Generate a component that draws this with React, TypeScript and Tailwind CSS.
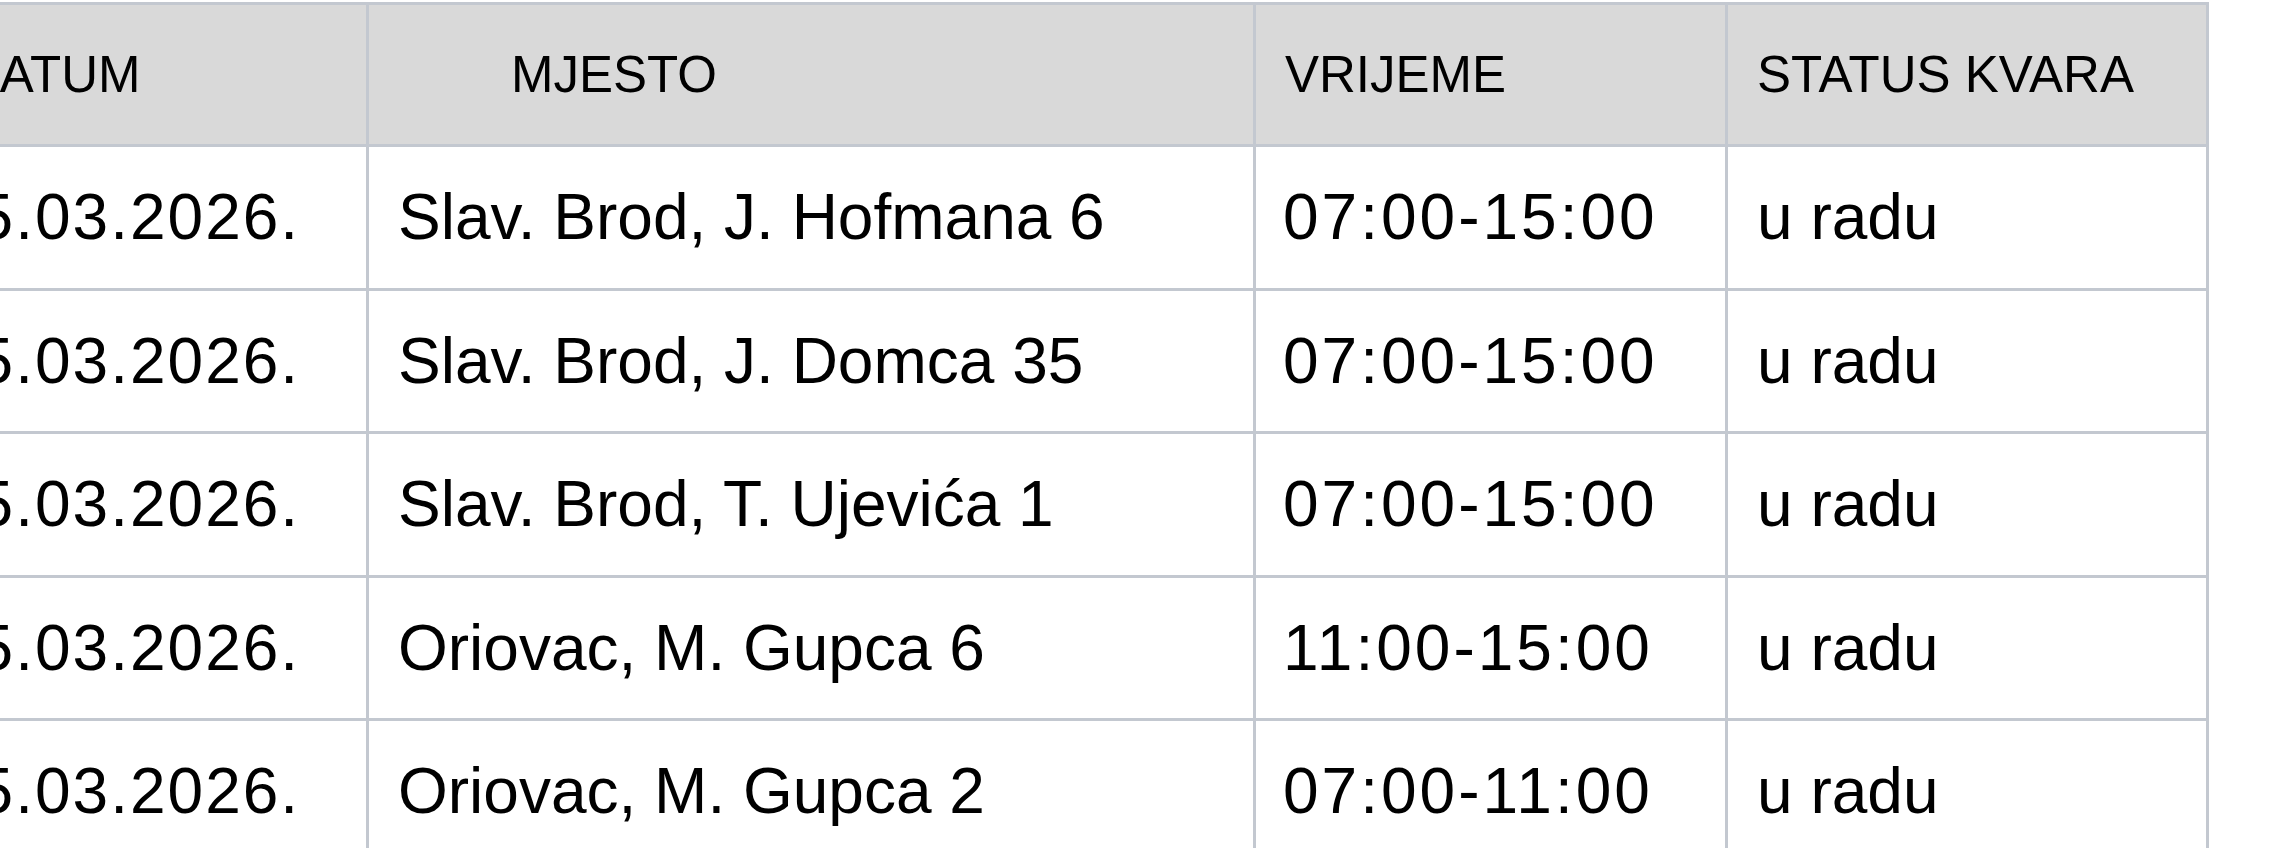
import React from "react";

const rows = [
  { datum: "05.03.2026.", mjesto: "Slav. Brod, J. Hofmana 6", vrijeme: "07:00-15:00", status: "u radu" },
  { datum: "05.03.2026.", mjesto: "Slav. Brod, J. Domca 35", vrijeme: "07:00-15:00", status: "u radu" },
  { datum: "05.03.2026.", mjesto: "Slav. Brod, T. Ujevića 1", vrijeme: "07:00-15:00", status: "u radu" },
  { datum: "05.03.2026.", mjesto: "Oriovac, M. Gupca 6", vrijeme: "11:00-15:00", status: "u radu" },
  { datum: "05.03.2026.", mjesto: "Oriovac, M. Gupca 2", vrijeme: "07:00-11:00", status: "u radu" },
];

export default function App() {
  return (
    <div
      className="w-[2275px] h-[848px] overflow-hidden bg-white text-black"
      style={{ fontFamily: '"Liberation Sans", Arial, sans-serif' }}
    >
      <table className="ml-[-87px] mt-[2px] table-fixed border-separate border-spacing-0 border-t-[3px] border-l-[3px] border-[#c3c8d0]">
        <colgroup>
          <col className="w-[453px]" />
          <col className="w-[887px]" />
          <col className="w-[472px]" />
          <col className="w-[481px]" />
        </colgroup>
        <thead>
          <tr className="bg-[#d9d9d9] h-[142px]">
            <th className="border-r-[3px] border-b-[3px] border-[#c3c8d0] pl-[47px] text-left align-middle text-[51px] font-normal leading-none">
              DATUM
            </th>
            <th className="border-r-[3px] border-b-[3px] border-[#c3c8d0] pl-[142px] text-left align-middle text-[51px] font-normal leading-none">
              MJESTO
            </th>
            <th className="border-r-[3px] border-b-[3px] border-[#c3c8d0] pl-[29px] text-left align-middle text-[51px] font-normal leading-none">
              VRIJEME
            </th>
            <th className="border-r-[3px] border-b-[3px] border-[#c3c8d0] pl-[29px] text-left align-middle text-[51px] font-normal leading-none whitespace-nowrap">
              STATUS KVARA
            </th>
          </tr>
        </thead>
        <tbody>
          {rows.map((r, i) => (
            <tr key={i} className="h-[143.5px] bg-white">
              <td className="border-r-[3px] border-b-[3px] border-[#c3c8d0] pl-[24px] align-middle text-[64px] leading-none tracking-[2px] whitespace-nowrap">
                {r.datum}
              </td>
              <td className="border-r-[3px] border-b-[3px] border-[#c3c8d0] pl-[29px] align-middle text-[64px] leading-none whitespace-nowrap">
                {r.mjesto}
              </td>
              <td className="border-r-[3px] border-b-[3px] border-[#c3c8d0] pl-[27px] align-middle text-[64px] leading-none tracking-[3px] whitespace-nowrap">
                {r.vrijeme}
              </td>
              <td className="border-r-[3px] border-b-[3px] border-[#c3c8d0] pl-[29px] align-middle text-[64px] leading-none whitespace-nowrap">
                {r.status}
              </td>
            </tr>
          ))}
        </tbody>
      </table>
    </div>
  );
}
